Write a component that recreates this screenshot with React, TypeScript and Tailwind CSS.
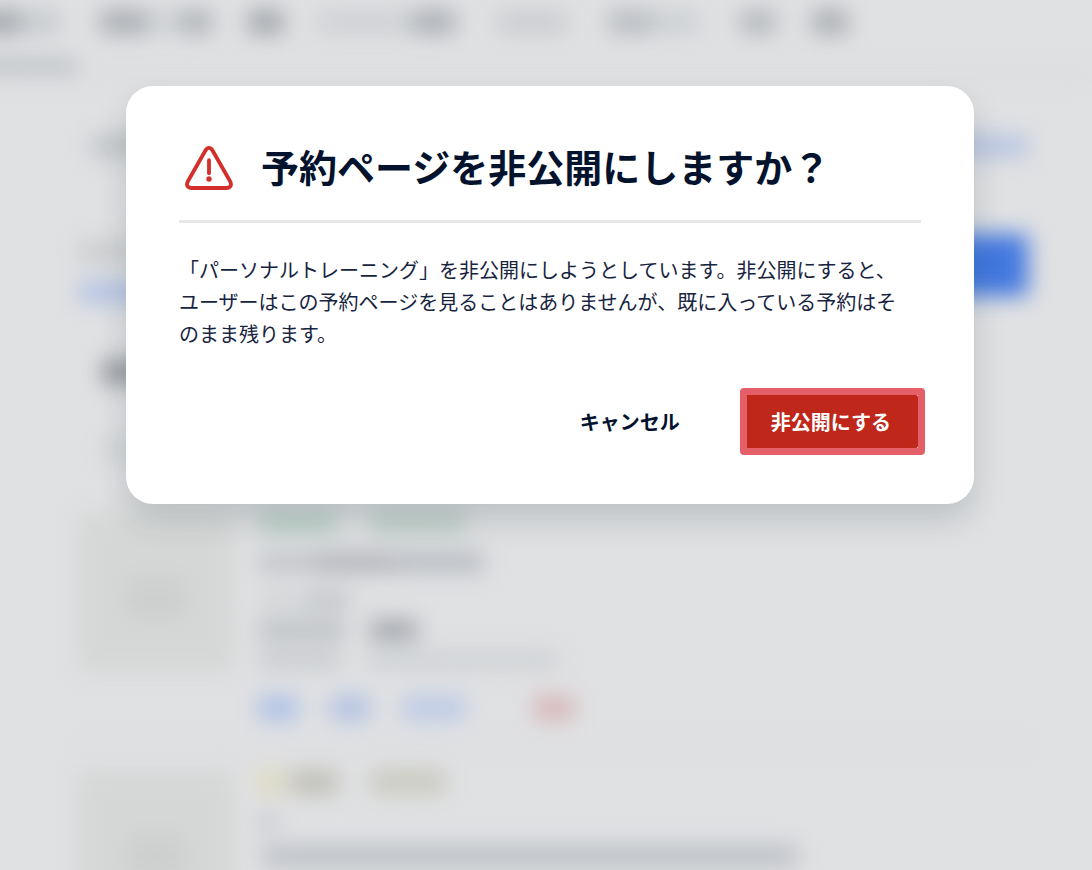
import React from "react";

function Bar({ className }: { className: string }) {
  return <span className={`block shrink-0 rounded-sm ${className}`} />;
}

function Navigation() {
  return (
    <div className="border-b-4 border-[#d8d9db]">
      <div className="flex h-11 items-center">
        <Bar className="-ml-5 h-6 w-10 bg-[#a2a6ac]" />
        <Bar className="h-6 w-10 bg-[#c6cace]" />
        <Bar className="ml-10 h-6 w-12 bg-[#a9adb2]" />
        <Bar className="h-6 w-8 bg-[#cfd2d5]" />
        <Bar className="h-6 w-8 bg-[#aeb2b7]" />
        <Bar className="ml-9 h-6 w-9 bg-[#a1a5aa]" />
        <Bar className="ml-8 h-6 w-24 bg-[#ced1d4]" />
        <Bar className="h-6 w-11 bg-[#abafb5]" />
        <Bar className="ml-10 h-6 w-[72px] bg-[#cacdd0]" />
        <Bar className="ml-10 h-6 w-11 bg-[#b7bbc0]" />
        <Bar className="h-6 w-12 bg-[#ccd0d3]" />
        <Bar className="ml-10 h-6 w-9 bg-[#b3b7bb]" />
        <Bar className="ml-9 h-6 w-9 bg-[#a8acb1]" />
      </div>
      <Bar className="mt-4 -ml-10 h-3 w-[118px] bg-[#b3b9bf]" />
    </div>
  );
}

function Thumbnail() {
  return (
    <div className="flex h-40 w-[156px] shrink-0 items-center justify-center bg-[#d5d7d6]">
      <Bar className="mt-3 h-10 w-14 bg-[#cdcfce]" />
    </div>
  );
}

function BlurredPage() {
  return (
    <div aria-hidden="true" className="h-full overflow-hidden bg-[#e0e1e3]">
      <div className="flex flex-col blur-[11px]">
        <Navigation />
        <div className="flex flex-col pr-16 pl-[78px]">
          <div className="mt-[60px] flex justify-between pl-3">
            <Bar className="h-5 w-32 bg-[#bec2c7]" />
            <Bar className="h-5 w-32 bg-[#b3c2e2]" />
          </div>
          <div className="mt-[78px] flex justify-between">
            <div className="flex flex-col gap-5 pt-2">
              <Bar className="h-5 w-40 bg-[#c9cbcd]" />
              <Bar className="h-5 w-24 bg-[#b0c0e4]" />
            </div>
            <Bar className="h-[62px] w-48 bg-[#4278de]" />
          </div>
          <div className="mt-[58px] flex flex-col gap-[58px] px-6">
            <Bar className="h-6 w-40 bg-[#92969c]" />
            <Bar className="h-4 w-56 bg-[#cdd1d4]" />
          </div>
          <div className="mt-[54px] flex gap-6">
            <Thumbnail />
            <div className="flex flex-col">
              <div className="flex gap-8">
                <Bar className="h-5 w-20 bg-[#b6cdc4]" />
                <Bar className="h-5 w-24 bg-[#bacdc6]" />
              </div>
              <div className="mt-5 flex">
                <Bar className="h-5 w-14 bg-[#c0c3c8]" />
                <Bar className="h-5 w-20 bg-[#b0b3b9]" />
                <Bar className="h-5 w-[90px] bg-[#b6bac0]" />
              </div>
              <div className="mt-5 flex">
                <Bar className="h-4 w-12 bg-[#d0d3d5]" />
                <Bar className="h-4 w-11 bg-[#bdc0c5]" />
              </div>
              <div className="mt-3 flex gap-6">
                <Bar className="h-5 w-[88px] bg-[#bcc0c4]" />
                <Bar className="h-5 w-12 bg-[#a0a4aa]" />
              </div>
              <div className="mt-3 flex gap-6">
                <Bar className="h-4 w-[84px] bg-[#c5c9cc]" />
                <Bar className="h-4 w-48 bg-[#cbcfd2]" />
              </div>
              <div className="mt-7 flex gap-8">
                <Bar className="h-6 w-10 bg-[#abc0e6]" />
                <Bar className="h-6 w-10 bg-[#b0c1e3]" />
                <Bar className="h-6 w-16 bg-[#bccae6]" />
                <Bar className="ml-9 h-6 w-10 bg-[#d6b5b6]" />
              </div>
            </div>
          </div>
          <div className="mt-6 h-0.5 bg-[#d8d9db]" />
          <div className="mt-6 flex gap-6">
            <Thumbnail />
            <div className="flex flex-col">
              <div className="flex">
                <Bar className="h-6 w-6 bg-[#dddab9]" />
                <Bar className="ml-2 h-6 w-12 bg-[#bfbeb5]" />
                <Bar className="ml-8 h-6 w-[76px] bg-[#c8c9be]" />
              </div>
              <Bar className="mt-5 h-4 w-5 bg-[#c2c6cf]" />
              <Bar className="mt-4 ml-1 h-5 w-[536px] bg-[#babec5]" />
            </div>
          </div>
        </div>
      </div>
    </div>
  );
}

function WarningIcon() {
  return (
    <svg aria-hidden="true" viewBox="0 0 48 46" className="h-[46px] w-12 shrink-0" fill="none" stroke="#d32f2b" strokeLinecap="round" strokeLinejoin="round">
      <path d="M20.3 4.7 3.2 34.8C.8 38.9 2.2 42 6.8 42H41.2C45.8 42 47.2 38.9 44.8 34.8L27.7 4.7C25.6 1 22.4 1 20.3 4.7Z" strokeWidth="3.8" />
      <path d="M24 14.2V27.2" strokeWidth="3.8" />
      <circle cx="24" cy="33" r="2.7" fill="#d32f2b" stroke="none" />
    </svg>
  );
}

export default function App() {
  return (
    <div className="relative h-screen overflow-hidden font-['Noto_Sans_CJK_JP',sans-serif]">
      <BlurredPage />
      <div className="absolute inset-0 flex items-start justify-center overflow-auto pt-[86px] pl-2">
        <section
          role="dialog"
          aria-modal="true"
          aria-labelledby="dialog-title"
          aria-describedby="dialog-message"
          className="w-full max-w-[848px] rounded-[27px] bg-white px-[53px] pt-[53px] pb-[49px] shadow-[0_16px_32px_rgba(20,40,50,0.17)]"
        >
          <header className="flex items-end gap-7 border-b-[3px] border-[#e8e8e6] pb-7 pl-[6px]">
            <WarningIcon />
            <h1 id="dialog-title" className="text-[38px] leading-[53px] font-bold text-[#03122d]">
              予約ページを非公開にしますか？
            </h1>
          </header>
          <p id="dialog-message" className="mt-[31px] pr-3 text-[20px] leading-8 text-[#172440]">
            「パーソナルトレーニング」を非公開にしようとしています。非公開にすると、ユーザーはこの予約ページを見ることはありませんが、既に入っている予約はそのまま残ります。
          </p>
          <footer className="-mr-1 mt-[38px] flex items-center justify-end gap-9">
            <button type="button" className="h-[53px] px-6 text-[20px] font-bold text-[#03122d]">
              キャンセル
            </button>
            <span className="flex rounded-[4px] border-[7px] border-[#e45f68]">
              <button type="button" className="h-[53px] rounded-r-[2px] bg-[#be271a] pr-[27px] pl-6 text-[20px] font-bold text-white">
                非公開にする
              </button>
            </span>
          </footer>
        </section>
      </div>
    </div>
  );
}
